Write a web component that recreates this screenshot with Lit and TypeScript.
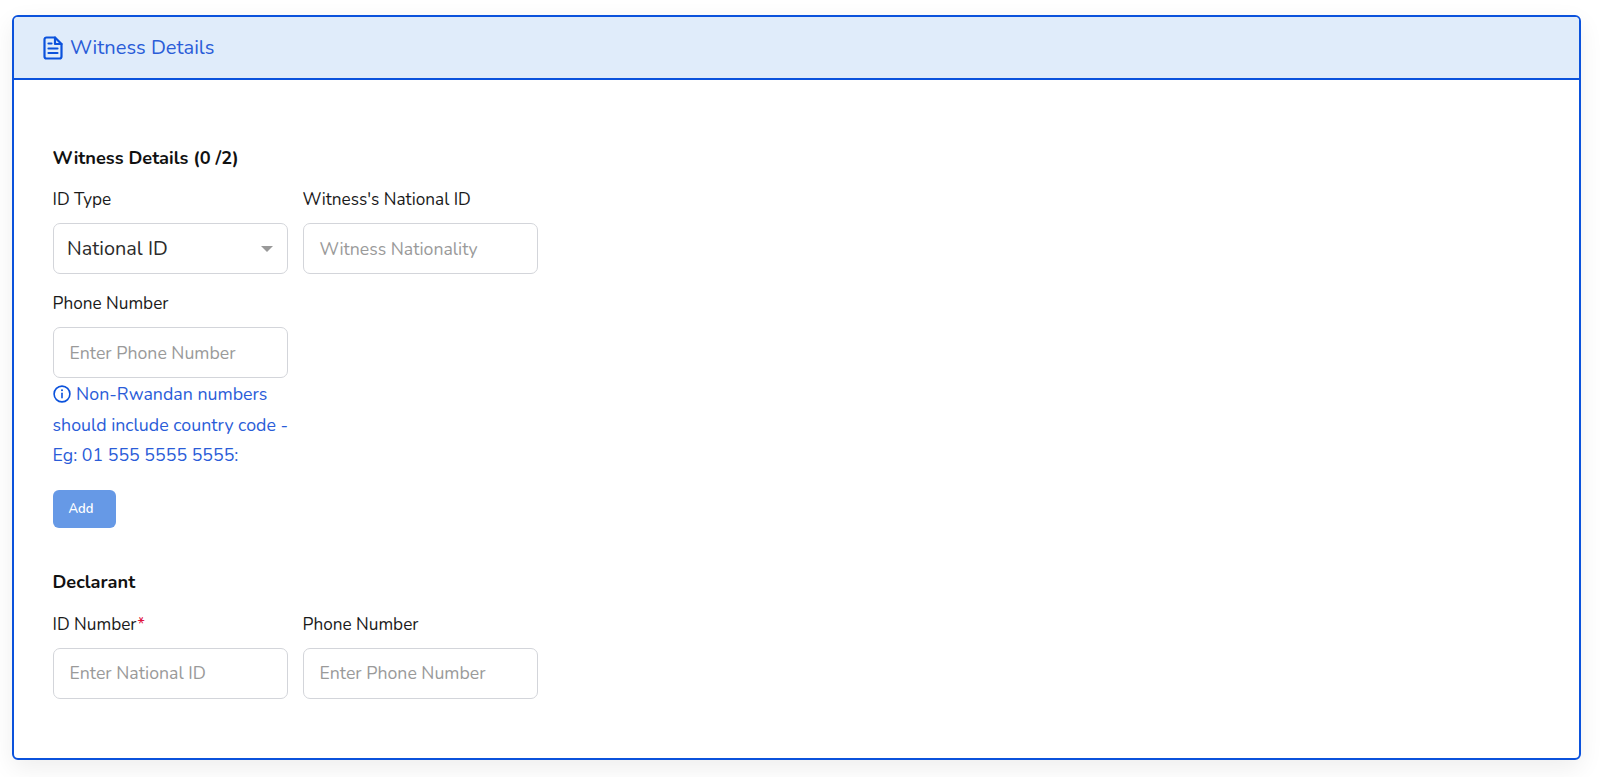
import { LitElement, html, css } from "lit";
import { customElement } from "lit/decorators.js";

@customElement("app-root")
export class AppRoot extends LitElement {
  static styles = css`
    :host { display: block; height: 777px; box-sizing: border-box; padding: 15px 19px 0 12px; background: #fff; font-family: "Nunito", "Lato", "Noto Sans", sans-serif; color: #212529; }
    .card { box-sizing: border-box; height: 745px; border: 2px solid #0b52dc; border-radius: 6px; box-shadow: 0 8px 24px rgba(0,0,0,.07); overflow: hidden; }
    .head { height: 63px; box-sizing: border-box; background: #e0ecfa; border-bottom: 2px solid #0b52dc; display: flex; align-items: center; gap: 7px; padding-left: 29px; color: #2a5cd8; font-size: 20.1px; }
    .head svg { width: 20px; height: 24px; color: #0b52dc; }
    .body { padding: 66px 0 0 38.5px; }
    h3 { margin: 0; font-size: 18.2px; font-weight: 700; color: #111; line-height: 24px; }
    .row { display: flex; gap: 15px; }
    .field { width: 235px; }
    label { display: block; font-size: 17.2px; line-height: 24px; color: #1a1a1a; margin-top: 18px; margin-bottom: 11px; }
    .req { color: #e0103a; }
    .box { box-sizing: border-box; height: 51px; border: 1px solid #d3d5da; border-radius: 7px; display: flex; align-items: center; padding-left: 16px; font-size: 17.7px; color: #9a9a9a; }
    .select { color: #2b2b2b; font-size: 19.9px; padding-left: 13.5px; justify-content: space-between; padding-right: 14px; }
    .arrow { width: 0; height: 0; border-left: 6px solid transparent; border-right: 6px solid transparent; border-top: 6px solid #999; }
    .info { width: 240px; margin-top: 1px; font-size: 17.8px; line-height: 30.5px; color: #2a5cd8; }
    .info svg { width: 18px; height: 18px; vertical-align: -3px; margin-right: 1px; color: #0b52dc; }
    button { display: block; width: 63px; height: 38px; margin-top: 19px; padding: 0 0 0 16px; text-align: left; border: 0; border-radius: 6px; background: #6699e6; color: #fff; font: 600 13px "Nunito", "Lato", sans-serif; }
    .decl { margin-top: 42px; margin-bottom: 1px; }
  `;

  render() {
    return html`
      <div class="card">
        <div class="head">
          <svg viewBox="0 0 20 24" fill="none" stroke="currentColor" stroke-width="2.2" stroke-linejoin="round" stroke-linecap="round">
            <path d="M3.5 1.5h8.5l6.5 6.5v12.5a2 2 0 0 1-2 2h-13a2 2 0 0 1-2-2v-17a2 2 0 0 1 2-2z"/>
            <path d="M12 1.5v6.5h6.5M5.5 7.5h3M5.5 12.5h9M5.5 17h9"/>
          </svg>
          <span>Witness Details</span>
        </div>
        <div class="body">
          <h3>Witness Details (0 /2)</h3>
          <div class="row">
            <div class="field">
              <label>ID Type</label>
              <div class="box select"><span>National ID</span><span class="arrow"></span></div>
            </div>
            <div class="field">
              <label>Witness's National ID</label>
              <div class="box">Witness Nationality</div>
            </div>
          </div>
          <div class="field">
            <label>Phone Number</label>
            <div class="box">Enter Phone Number</div>
          </div>
          <div class="info">
            <svg viewBox="0 0 18 18" fill="none" stroke="currentColor" stroke-width="1.6" stroke-linecap="round"><circle cx="9" cy="9" r="7.9"/><path d="M9 8.2v4.6"/><path d="M9 5.2v.1" stroke-width="2"/></svg>
            Non-Rwandan numbers should include country code - Eg: 01 555 5555 5555:
          </div>
          <button>Add</button>
          <h3 class="decl">Declarant</h3>
          <div class="row">
            <div class="field">
              <label>ID Number<span class="req">*</span></label>
              <div class="box">Enter National ID</div>
            </div>
            <div class="field">
              <label>Phone Number</label>
              <div class="box">Enter Phone Number</div>
            </div>
          </div>
        </div>
      </div>
    `;
  }
}
